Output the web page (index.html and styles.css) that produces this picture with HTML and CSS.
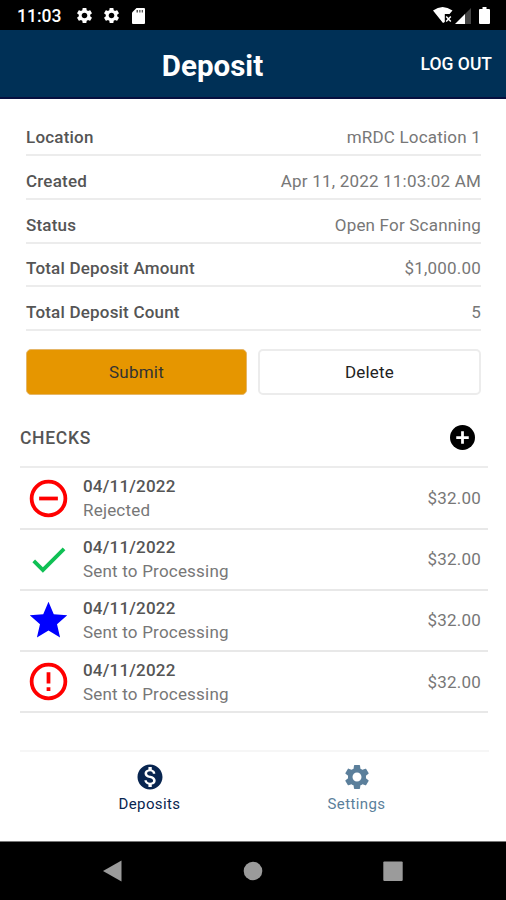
FILE: index.html
```
<!DOCTYPE html>
<html lang="en">

<head>
    <meta charset="UTF-8">
    <meta name="viewport" content="width=device-width, initial-scale=1.0">
    <title>Deposit</title>
    <link rel="stylesheet" href="styles.css">
</head>

<body>
<!-- shared icons -->
<svg class="defs">
    <symbol id="gear" viewBox="0 0 24 24">
        <path d="M19.14 12.94c.04-.3.06-.61.06-.94 0-.32-.02-.64-.07-.94l2.03-1.58c.18-.14.23-.41.12-.61l-1.92-3.32c-.12-.22-.37-.29-.59-.22l-2.39.96c-.5-.38-1.03-.7-1.62-.94L14.4 2.81c-.04-.24-.24-.41-.48-.41h-3.84c-.24 0-.43.17-.47.41L9.25 5.35c-.59.24-1.13.57-1.62.94l-2.39-.96c-.22-.08-.47 0-.59.22L2.74 8.87c-.12.21-.08.47.12.61l2.03 1.58c-.05.3-.09.63-.09.94s.02.64.07.94l-2.03 1.58c-.18.14-.23.41-.12.61l1.92 3.32c.12.22.37.29.59.22l2.39-.96c.5.38 1.03.7 1.62.94l.36 2.54c.05.24.24.41.48.41h3.84c.24 0 .44-.17.47-.41l.36-2.54c.59-.24 1.13-.56 1.62-.94l2.39.96c.22.08.47 0 .59-.22l1.92-3.32c.12-.22.07-.47-.12-.61zM12 15.6c-1.98 0-3.6-1.62-3.6-3.6s1.62-3.6 3.6-3.6 3.6 1.62 3.6 3.6-1.62 3.6-3.6 3.6z"/>
    </symbol>
</svg>

<div class="status-bar">
    <span class="clock">11:03</span>
    <svg class="status-gear"><use href="#gear"/></svg>
    <svg class="status-gear"><use href="#gear"/></svg>
    <svg class="sd-card" viewBox="0 0 13 16"><path d="M4.5 0H12q1 0 1 1v14q0 1-1 1H1q-1 0-1-1V4.5z"/><path class="sd-pins" d="M4.5 2H6v2.500H4.500zM7.200 2h1.300v2.500H7.200zM9.700 2H11v2.500H9.700z"/></svg>
    <div class="status-right">
        <svg class="wifi" viewBox="0 0 20 17"><path d="M0 3.500Q9.500-3.500 19.500 3.500L16.500 7H11.800v8L10 16z"/><path class="cross" d="M13.200 9.400l4.600 5M17.800 9.400l-4.600 5"/></svg>
        <svg class="signal" viewBox="0 0 16 16"><path class="dim" d="M16 0v16H9V7z"/><path d="M0 16L10 6v10z"/></svg>
        <svg class="battery" viewBox="0 0 11 17"><path d="M3.500 0h4v2H10q1 0 1 1v13q0 1-1 1H1q-1 0-1-1V3q0-1 1-1h2.500z"/></svg>
    </div>
</div>

<div class="header">
    <h1 class="title">Deposit</h1>
    <a class="logout">LOG OUT</a>
</div>

<div class="content">
    <div class="info">
        <div class="info-item"><b>Location</b><span>mRDC Location 1</span></div>
        <div class="info-item"><b>Created</b><span>Apr 11, 2022 11:03:02 AM</span></div>
        <div class="info-item"><b>Status</b><span>Open For Scanning</span></div>
        <div class="info-item"><b>Total Deposit Amount</b><span>$1,000.00</span></div>
        <div class="info-item"><b>Total Deposit Count</b><span>5</span></div>
    </div>

    <div class="buttons">
        <button class="btn submit">Submit</button>
        <button class="btn delete">Delete</button>
    </div>

    <div class="checks-head">
        <h2 class="checks-title">CHECKS</h2>
        <svg class="add" viewBox="2 2 20 20"><circle cx="12" cy="12" r="10"/><path d="M12 7v10M7 12h10"/></svg>
    </div>

    <div class="checks">
        <div class="check">
            <svg class="check-icon red" viewBox="0 0 24 24"><circle cx="12" cy="12" r="9"/><path d="M7 12h10"/></svg>
            <div class="check-text"><b>04/11/2022</b><span>Rejected</span></div>
            <span class="amount">$32.00</span>
        </div>
        <div class="check">
            <svg class="check-icon green" viewBox="0 0 24 24"><path d="M9 16.170L4.830 12l-1.420 1.410L9 19 21 7l-1.410-1.410z"/></svg>
            <div class="check-text"><b>04/11/2022</b><span>Sent to Processing</span></div>
            <span class="amount">$32.00</span>
        </div>
        <div class="check">
            <svg class="check-icon blue" viewBox="0 0 24 24"><path d="M12 17.270L18.180 21l-1.640-7.030L22 9.240l-7.190-.61L12 2 9.190 8.630 2 9.240l5.460 4.730L5.820 21z"/></svg>
            <div class="check-text"><b>04/11/2022</b><span>Sent to Processing</span></div>
            <span class="amount">$32.00</span>
        </div>
        <div class="check">
            <svg class="check-icon red" viewBox="0 0 24 24"><circle cx="12" cy="12" r="9"/><path d="M12 7v6M12 15v2"/></svg>
            <div class="check-text"><b>04/11/2022</b><span>Sent to Processing</span></div>
            <span class="amount">$32.00</span>
        </div>
    </div>
</div>

<div class="tabs">
    <div class="tab active">
        <svg class="tab-icon" viewBox="0 0 24 24"><path d="M12 2C6.480 2 2 6.480 2 12s4.480 10 10 10 10-4.480 10-10S17.520 2 12 2zm1.410 16.090V20h-2.670v-1.930c-1.710-.36-3.160-1.460-3.270-3.400h1.960c.1 1.050.82 1.870 2.650 1.870 1.960 0 2.400-.98 2.400-1.590 0-.83-.44-1.610-2.670-2.140-2.480-.6-4.180-1.620-4.180-3.670 0-1.720 1.390-2.840 3.110-3.210V4h2.670v1.950c1.860.45 2.790 1.860 2.850 3.390H14.300c-.05-1.110-.64-1.870-2.220-1.870-1.500 0-2.400.68-2.400 1.640 0 .84.65 1.390 2.670 1.910s4.180 1.390 4.180 3.910c-.01 1.830-1.380 2.830-3.120 3.160z"/></svg>
        <span>Deposits</span>
    </div>
    <div class="tab">
        <svg class="tab-icon"><use href="#gear"/></svg>
        <span>Settings</span>
    </div>
</div>

<div class="android-nav">
    <svg viewBox="0 0 20 22"><path d="M0 11L18.500 .5v21z"/></svg>
    <svg viewBox="0 0 20 22"><circle cx="10" cy="11" r="9.300"/></svg>
    <svg viewBox="0 0 20 22"><rect x=".3" y="1.500" width="19.400" height="19.400" rx="1"/></svg>
</div>
</body>

</html>
```
FILE: styles.css
```
* {
    box-sizing: border-box;
}
body {
    margin: 0;
    height: 900px;
    display: flex;
    flex-direction: column;
    overflow: hidden;
    background-color: #fff;
    color: #777;
    font-family: Roboto, "Liberation Sans", sans-serif;
    font-size: 17px;
    letter-spacing: 0.2px;
}
svg {
    display: block;
    flex: none;
    fill: currentColor;
}
b {
    font-weight: 500;
    color: #555;
}
.defs {
    display: none;
}

/* status bar */
.status-bar {
    height: 30px;
    flex: none;
    display: flex;
    align-items: center;
    padding: 1px 16px 0 17px;
    background-color: #000;
    color: #fff;
}
.clock {
    width: 58px;
    font-size: 17.5px;
    font-weight: 500;
    letter-spacing: 0;
}
.status-gear {
    width: 19px;
    height: 19px;
    margin-right: 8px;
}
.sd-card {
    width: 13px;
    height: 16px;
    margin-left: 3px;
}
.sd-pins {
    fill: #555;
}
.status-right {
    margin-left: auto;
    display: flex;
    align-items: center;
}
.wifi {
    width: 20px;
    height: 17px;
}
.cross {
    stroke: #fff;
    stroke-width: 1.5;
}
.signal {
    width: 16px;
    height: 16px;
    margin: 1px 8px 0 2px;
}
.dim {
    fill: #444;
}
.battery {
    width: 11px;
    height: 17px;
}

/* header */
.header {
    height: 69px;
    flex: none;
    display: grid;
    grid-template-columns: 1fr auto 1fr;
    align-items: center;
    padding: 1px 14px 0 0;
    background-color: #003056;
    border-bottom: 2px solid #07103f;
    color: #fff;
}
.title {
    grid-column: 2;
    margin: 3px 0 0 -67px;
    font-size: 29.5px;
    font-weight: 700;
    letter-spacing: 0;
}
.logout {
    justify-self: end;
    font-size: 17.5px;
    font-weight: 500;
    letter-spacing: 0;
}

/* deposit details */
.content {
    flex: 1;
    padding: 13.6px 18px 0 20px;
}
.info {
    padding: 0 7px 0 6px;
}
.info-item {
    height: 43.7px;
    display: flex;
    justify-content: space-between;
    align-items: flex-end;
    padding-bottom: 7px;
    border-bottom: 2px solid #ececec;
    line-height: 20px;
}
.buttons {
    display: flex;
    gap: 11px;
    padding: 18.4px 7px 0 6px;
}
.btn {
    flex: 1;
    height: 46px;
    padding: 0;
    border: 2px solid #ececec;
    border-radius: 5px;
    background-color: #fff;
    color: #222;
    font: inherit;
    letter-spacing: inherit;
}
.submit {
    background-color: #e69600;
    border: 1px solid #e5b668;
    color: #333;
}

/* checks */
.checks-head {
    height: 73px;
    display: flex;
    justify-content: space-between;
    align-items: center;
    padding: 14px 13px 0 0;
    border-bottom: 2px solid #ececec;
}
.checks-title {
    margin: 0;
    font-size: 17.5px;
    font-weight: 500;
    letter-spacing: 0.7px;
    color: #555;
}
.add {
    width: 25px;
    height: 25px;
    color: #000;
}
.add path {
    stroke: #fff;
    stroke-width: 2.2;
}
.check {
    height: 61.2px;
    display: flex;
    align-items: center;
    padding: 0 7px 0 6px;
    border-bottom: 2px solid #e8e8e8;
}
.check-icon {
    width: 45px;
    height: 45px;
}
.red {
    fill: none;
    stroke: #f00;
    stroke-width: 2;
}
.green {
    color: #0fc054;
}
.blue {
    color: #00f;
}
.check-text {
    flex: 1;
    display: flex;
    flex-direction: column;
    margin-left: 12px;
    line-height: 24px;
}

/* bottom tabs */
.tabs {
    height: 91px;
    flex: none;
    display: flex;
    margin: 0 17px 0 20px;
    padding: 10px 29px 0 26px;
    border-top: 2px solid #f6f6f6;
}
.tab {
    flex: 1;
    display: flex;
    flex-direction: column;
    align-items: center;
    color: #5b7f9b;
    font-size: 15px;
    letter-spacing: 0.4px;
}
.active {
    color: #082550;
}
.tab-icon {
    width: 30px;
    height: 30px;
    margin-bottom: 3px;
}

.android-nav {
    height: 59px;
    flex: none;
    display: flex;
    justify-content: center;
    align-items: center;
    gap: 120px;
    border-top: 1px solid #777;
    background-color: #000;
    color: #9b9b9b;
}
.android-nav svg {
    width: 20px;
    height: 22px;
}
```
